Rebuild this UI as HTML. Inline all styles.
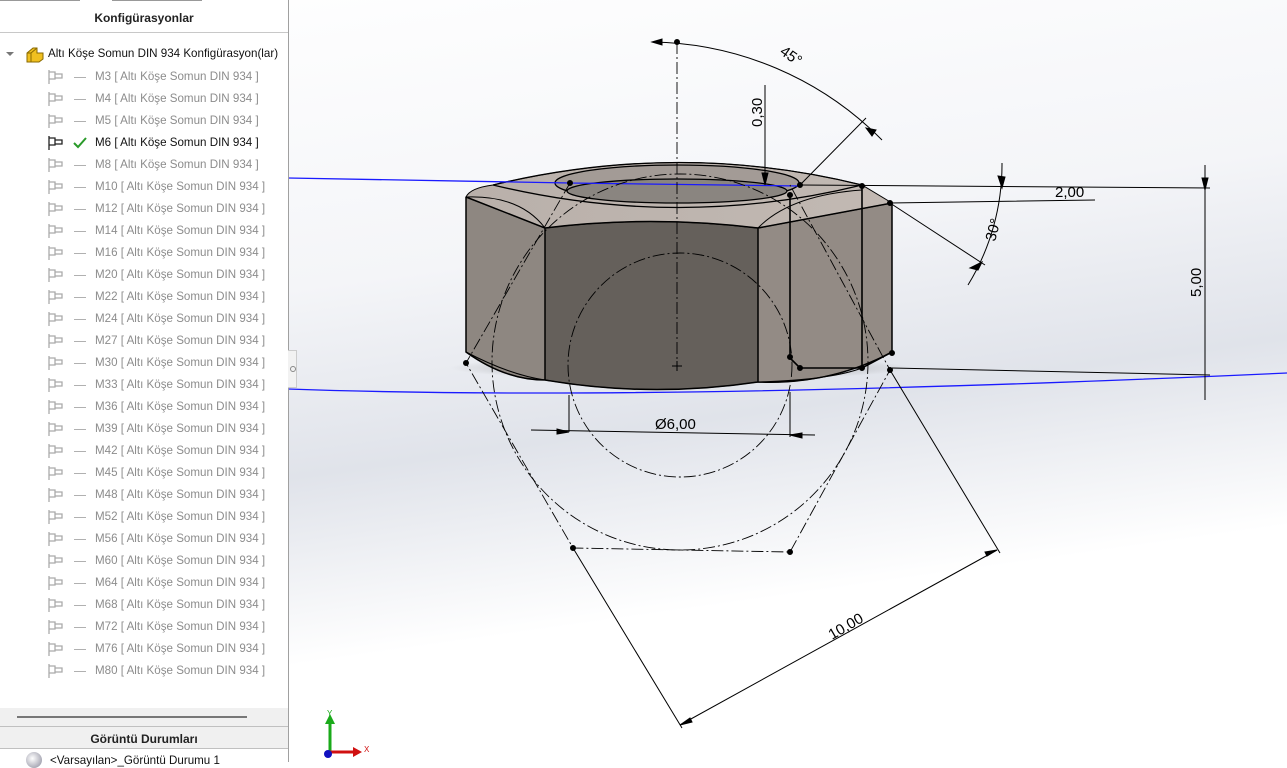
<!DOCTYPE html>
<html><head><meta charset="utf-8"><style>
body{margin:0;width:1287px;height:762px;overflow:hidden;position:relative;font-family:"Liberation Sans",sans-serif;background:#fff}
#vp{position:absolute;left:0;top:0;width:1287px;height:762px;background:linear-gradient(172deg,#ffffff 0%,#f4f5f8 35%,#e0e3ea 55%,#ffffff 75%,#ffffff 100%)}
#panel{position:absolute;left:0;top:0;width:288px;height:762px;background:#fff;border-right:1px solid #a0a0a0}
.hd{position:absolute;left:0;width:288px;text-align:center;font-weight:bold;font-size:12px;color:#222}
.row{position:absolute;left:48px;height:18px;font-size:11.6px;color:#8c8c8c;white-space:nowrap;line-height:18px}
.row .ic{position:absolute;left:0;top:2px;width:16px;height:14px}
.row .d{position:absolute;left:26px;top:9px;width:12px;height:1px;background:#b0b0b0}
.row .t{position:absolute;left:47px;top:0}
</style></head><body>
<div id="vp"></div>
<svg style="position:absolute;left:0;top:0" width="1287" height="762" viewBox="0 0 1287 762" fill="none" stroke="#000" stroke-width="1">
<defs><linearGradient id="tp" x1="0" x2="1"><stop offset="0" stop-color="#b9b0aa"/><stop offset="1" stop-color="#c2b9b3"/></linearGradient>
<radialGradient id="sh" cx="0.5" cy="0.5" r="0.5"><stop offset="0" stop-color="#444" stop-opacity=".6"/><stop offset="1" stop-color="#444" stop-opacity="0"/></radialGradient></defs>
<ellipse cx="680" cy="368" rx="230" ry="12" fill="url(#sh)" stroke="none"/>
<path d="M466,197 L545,228 L545,380 Q505,380 466,352 Z" fill="#8e8781"/>
<path d="M545,228 Q650,215 758,228 L758,382 Q650,398 545,380 Z" fill="#65605b"/>
<path d="M758,228 L892,203 L892,352 Q830,385 758,382 Z" fill="#938b85"/>
<path d="M466,197 Q470,188 493,185 Q680,140 862,185 L892,203 L758,228 Q650,215 545,228 Z" fill="url(#tp)"/>
<path d="M466,197 L545,228 L545,380 M545,228 Q650,215 758,228 L758,382 M758,228 L892,203 L892,352 Q830,385 758,382 Q650,398 545,380 Q505,380 466,352 L466,197" stroke-width="1.5"/>
<path d="M493,185 Q680,140 862,185 M493,185 Q680,230 862,185" stroke-width="1.3"/>
<path d="M466,197 Q520,195 545,228 M758,228 Q790,195 862,190 M466,352 Q510,375 545,380 M758,382 Q830,380 862,368"/>
<ellipse cx="677" cy="183" rx="122" ry="18" fill="#a39b96" stroke-width="1.3"/>
<ellipse cx="677" cy="191" rx="110" ry="12" fill="#8a8580" stroke-width="1.3"/>
<path d="M790,195 L790,358 L800,368 L862,368 L892,352 M862,185 L862,368" stroke-width="1.6"/>
<path d="M288,178 L570,183 M570,183 L800,186" stroke="#1a1aff" stroke-width="1.3"/>
<path d="M288,389 Q650,402 1287,373" stroke="#1a1aff" stroke-width="1.3"/>
<g stroke-dasharray="12,3,2,3" stroke-width="0.9">
<path d="M677,42 L677,370"/>
<circle cx="680" cy="362" r="188"/>
<circle cx="680" cy="365" r="112"/>
<path d="M570,183 L466,363 L573,548 L790,552 L890,370 L790,185"/>
<path d="M862,185 L862,368"/>
</g>
<path d="M672,366 L682,366 M677,361 L677,371"/>
<path d="M652,42 A330,330 0 0 1 882,140"/>
<path d="M800,185 L866,118"/>
<path d="M765,85 L765,185"/>
<path d="M800,185 L1210,188 M890,203 L1095,200"/>
<path d="M1002,163 A230,230 0 0 1 968,285"/>
<path d="M890,203 L985,265"/>
<path d="M1205,165 L1205,400 M892,368 L1210,375"/>
<path d="M569,395 L569,432 M790,392 L790,437 M531,430 L815,435"/>
<path d="M573,548 L682,728 M890,370 L1000,553 M680,725 L997,550"/>
<g fill="#000">
<circle cx="677" cy="42" r="2.5"/><circle cx="570" cy="183" r="2.5"/><circle cx="800" cy="185" r="2.5"/><circle cx="790" cy="195" r="2.5"/><circle cx="862" cy="186" r="2.5"/><circle cx="890" cy="203" r="2.5"/><circle cx="466" cy="363" r="2.5"/><circle cx="573" cy="548" r="2.5"/><circle cx="790" cy="552" r="2.5"/><circle cx="890" cy="370" r="2.5"/><circle cx="862" cy="368" r="2.5"/><circle cx="800" cy="368" r="2.5"/><circle cx="790" cy="357" r="2.5"/><circle cx="892" cy="353" r="2.5"/>
<path d="M765,185 L762,173 L768,173 Z M1205,190 L1202,178 L1208,178 Z M1002,188 L998,176 L1005,177 Z M652,42 L662,39 L662,45Z M866,128 L872,136 L876,130Z M970,268 L982,262 L978,270Z M569,432 L557,429 L557,434Z M790,435 L802,433 L802,438Z M680,725 L690,718 L692,722Z M997,550 L987,556 L985,552Z"/>
</g>
<g stroke="none" fill="#000" font-family="Liberation Sans,sans-serif" font-size="15">
<text x="780" y="60" transform="rotate(35 790 55)">45°</text>
<text x="0" y="0" transform="translate(762,127) rotate(-90)">0,30</text>
<text x="1055" y="197">2,00</text>
<text x="0" y="0" transform="translate(995,242) rotate(-75)">30°</text>
<text x="0" y="0" transform="translate(1201,297) rotate(-90)">5,00</text>
<text x="655" y="429">Ø6,00</text>
<text x="0" y="0" transform="translate(832,640) rotate(-30)">10,00</text>
</g>
<path d="M330,752 L330,722" stroke="#1aaa1a" stroke-width="3"/><path d="M325,724 L330,714 L335,724Z" fill="#1aaa1a" stroke="none"/>
<path d="M330,752 L355,752" stroke="#d01010" stroke-width="3"/><path d="M353,747 L362,752 L353,757Z" fill="#d01010" stroke="none"/>
<circle cx="328" cy="754" r="4" fill="#1010c0" stroke="none"/>
<text x="327" y="716" font-size="8" fill="#1aaa1a" stroke="none">Y</text><text x="364" y="752" font-size="8" fill="#d01010" stroke="none">X</text>
</svg>
<div id="panel">
<div style="position:absolute;left:0;top:0;width:80px;height:1px;background:#999"></div>
<div style="position:absolute;left:112px;top:0;width:90px;height:1px;background:#999"></div>
<div class="hd" style="top:11px">Konfigürasyonlar</div>
<div style="position:absolute;left:0;top:32px;width:288px;height:1px;background:#c8c8c8"></div>
<div style="position:absolute;left:6px;top:52px;width:0;height:0;border-left:4px solid transparent;border-right:4px solid transparent;border-top:4px solid #777"></div>
<svg style="position:absolute;left:25px;top:45px" width="20" height="18" viewBox="0 0 20 18"><path d="M2,8 L8,3 L12,3 L12,8 L18,8 L18,14 L14,17 L2,17 Z" fill="#f0c020" stroke="#8a6a00"/><path d="M2,8 L6,8 L6,17 M6,8 L12,3" stroke="#8a6a00" fill="none"/></svg>
<div style="position:absolute;left:48px;top:47px;font-size:11.6px;color:#111">Altı Köşe Somun DIN 934 Konfigürasyon(lar)</div>
<div id="rows"></div>
<div style="position:absolute;left:0;top:708px;width:288px;height:54px;background:#f0f0f0"></div>
<div style="position:absolute;left:17px;top:716px;width:230px;height:2px;background:#777"></div>
<div style="position:absolute;left:0;top:726px;width:288px;height:1px;background:#c0c0c0"></div>
<div class="hd" style="top:732px">Görüntü Durumları</div>
<div style="position:absolute;left:0;top:748px;width:288px;height:1px;background:#c0c0c0"></div>
<div style="position:absolute;left:0;top:749px;width:288px;height:13px;background:#fff"></div>
<div style="position:absolute;left:26px;top:752px;width:16px;height:16px;border-radius:50%;background:radial-gradient(circle at 40% 40%,#fff,#889)"></div>
<div style="position:absolute;left:50px;top:754px;font-size:11.6px;color:#111">&lt;Varsayılan&gt;_Görüntü Durumu 1</div>
</div>
<div style="position:absolute;left:288px;top:350px;width:8px;height:36px;background:#f2f2f2;border:1px solid #ccc;border-left:none"></div>
<div style="position:absolute;left:290px;top:366px;width:4px;height:4px;border-radius:50%;border:1px solid #888"></div>
<script>
var n=["M3","M4","M5","M6","M8","M10","M12","M14","M16","M20","M22","M24","M27","M30","M33","M36","M39","M42","M45","M48","M52","M56","M60","M64","M68","M72","M76","M80"];
var h="";n.forEach(function(m,i){var a=m=="M6";var c=a?"#222":"#aaa";
h+='<div class="row" style="top:'+(68+i*22)+'px;'+(a?'color:#111':'')+'"><svg class="ic" viewBox="0 0 16 14"><path d="M1,0 L1,14 M1,2 L7,2 L7,9 L1,9 M7,4 L14,4 L14,8 L7,8" fill="none" stroke="'+c+'" stroke-width="1.3"/></svg>'+
(a?'<svg style="position:absolute;left:25px;top:3px" width="14" height="12"><path d="M1,6 L5,10 L13,1" stroke="#2a9a2a" stroke-width="2" fill="none"/></svg>':'<div class="d"></div>')+
'<span class="t">'+m+' [ Altı Köşe Somun DIN 934 ]</span></div>';});
document.getElementById("rows").innerHTML=h;
</script>
</body></html>
